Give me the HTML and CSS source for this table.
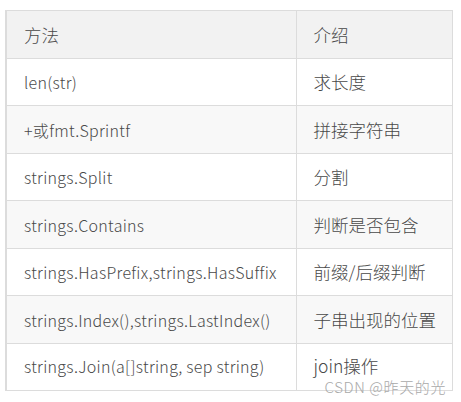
FILE: index.html
```html
<!DOCTYPE html>
<html lang="zh">
<head>
<meta charset="utf-8">
<link rel="stylesheet" href="styles.css">
</head>
<body>
<div class="wrap">
  <table class="tbl">
    <thead>
      <tr><th class="c1">方法</th><th class="c2">介绍</th></tr>
    </thead>
    <tbody>
      <tr><td>len(str)</td><td>求长度</td></tr>
      <tr><td>+或fmt.Sprintf</td><td>拼接字符串</td></tr>
      <tr><td>strings.Split</td><td>分割</td></tr>
      <tr><td>strings.Contains</td><td>判断是否包含</td></tr>
      <tr><td>strings.HasPrefix,strings.HasSuffix</td><td>前缀/后缀判断</td></tr>
      <tr><td>strings.Index(),strings.LastIndex()</td><td>子串出现的位置</td></tr>
      <tr class="last"><td>strings.Join(a[]string, sep string)</td><td>join操作</td></tr>
    </tbody>
  </table>
  <div class="mark">CSDN @昨天的光</div>
</div>
</body>
</html>
```
FILE: styles.css
```css
html, body {
  margin: 0;
  padding: 0;
  background: #ffffff;
}
.wrap {
  position: relative;
  padding: 10px 0 12px 5px;
  width: 448px;
  font-family: "Noto Sans CJK SC", "Noto Sans", sans-serif;
  color: #484848;
}
.tbl {
  border-collapse: collapse;
  width: 448px;
  font-size: 16px;
  line-height: 24px;
}
.tbl th, .tbl td {
  border: 1px solid #dcdcdc;
  padding: 11.5px 16px 11px 17px;
  text-align: left;
  font-weight: 300;
  white-space: nowrap;
  letter-spacing: 0.3px;
}
.tbl tr > :first-child {
  border-left: 2px solid #dcdcdc;
}
.tbl tr > :last-child,
.tbl th.c1 {
  font-size: 17.5px;
  letter-spacing: 0;
}
.tbl th.c1 { width: 256px; }
.tbl thead tr { background: #f2f2f2; }
.tbl tbody tr:nth-child(even) { background: #f8f8f8; }
.tbl tbody tr:nth-child(odd) { background: #ffffff; }
.tbl tr.last td {
  padding-top: 10.5px;
  padding-bottom: 12px;
}
.mark {
  position: absolute;
  right: 7px;
  top: 380px;
  font-size: 15px;
  line-height: 14px;
  letter-spacing: 0.6px;
  color: #a9a9a9;
  font-weight: 300;
  font-family: "Noto Sans CJK SC", "Noto Sans", sans-serif;
}
```
